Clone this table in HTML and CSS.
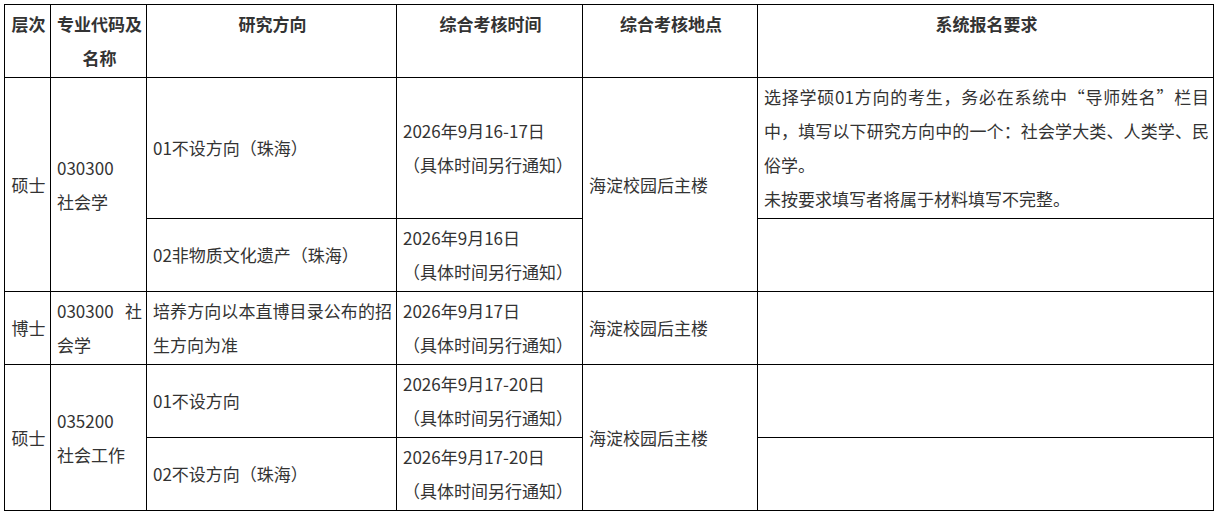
FILE: index.html
```html
<!DOCTYPE html>
<html lang="zh-CN">
<head>
<meta charset="utf-8">
<title>综合考核安排</title>
<link rel="stylesheet" href="styles.css">
</head>
<body>
<table class="plan">
  <colgroup>
    <col class="c-level">
    <col class="c-major">
    <col class="c-dir">
    <col class="c-time">
    <col class="c-place">
    <col class="c-req">
  </colgroup>
  <thead>
    <tr>
      <th>层次</th>
      <th>专业代码及<br>名称</th>
      <th>研究方向</th>
      <th>综合考核时间</th>
      <th>综合考核地点</th>
      <th>系统报名要求</th>
    </tr>
  </thead>
  <tbody>
    <tr class="r2">
      <td class="center" rowspan="2">硕士</td>
      <td class="just" rowspan="2">030300<br>社会学</td>
      <td>01不设方向（珠海）</td>
      <td>2026年9月16-17日<br>（具体时间另行通知）</td>
      <td rowspan="2">海淀校园后主楼</td>
      <td class="just">
        <p class="para">选择学硕01方向的考生，务必在系统中“导师姓名”栏目中，填写以下研究方向中的一个：社会学大类、人类学、民俗学。</p>
        <p class="para">未按要求填写者将属于材料填写不完整。</p>
      </td>
    </tr>
    <tr class="r1">
      <td>02非物质文化遗产（珠海）</td>
      <td>2026年9月16日<br>（具体时间另行通知）</td>
      <td></td>
    </tr>
    <tr class="r1">
      <td class="center">博士</td>
      <td class="just">030300 社会学</td>
      <td class="just">培养方向以本直博目录公布的招生方向为准</td>
      <td>2026年9月17日<br>（具体时间另行通知）</td>
      <td>海淀校园后主楼</td>
      <td></td>
    </tr>
    <tr class="r1">
      <td class="center" rowspan="2">硕士</td>
      <td class="just" rowspan="2">035200<br>社会工作</td>
      <td>01不设方向</td>
      <td>2026年9月17-20日<br>（具体时间另行通知）</td>
      <td rowspan="2">海淀校园后主楼</td>
      <td></td>
    </tr>
    <tr class="r1">
      <td>02不设方向（珠海）</td>
      <td>2026年9月17-20日<br>（具体时间另行通知）</td>
      <td></td>
    </tr>
  </tbody>
</table>
</body>
</html>
```

FILE: styles.css
```css
html, body {
  background: #ffffff;
}
body {
  margin: 4px;
  font-family: "Noto Sans CJK SC", "Noto Sans", sans-serif;
  font-size: 17px;
  line-height: 34px;
  color: #333333;
}
.plan {
  border-collapse: collapse;
  table-layout: fixed;
  width: 1210px;
}
.c-level { width: 46px; }
.c-major { width: 96px; }
.c-dir { width: 250px; }
.c-time { width: 186px; }
.c-place { width: 175px; }
.c-req { width: 456px; }

.plan th,
.plan td {
  border: 1px solid #000000;
  padding: 2px 4px 2px 6px;
  word-break: break-all;
}
.plan th {
  font-weight: bold;
  text-align: center;
  vertical-align: top;
  height: 67px;
}
.plan td {
  text-align: left;
  vertical-align: middle;
}
.plan td.center {
  text-align: center;
}
.plan td.just {
  text-align: justify;
}
.para {
  margin: 0;
}
.r1 td {
  height: 68px;
}
```
